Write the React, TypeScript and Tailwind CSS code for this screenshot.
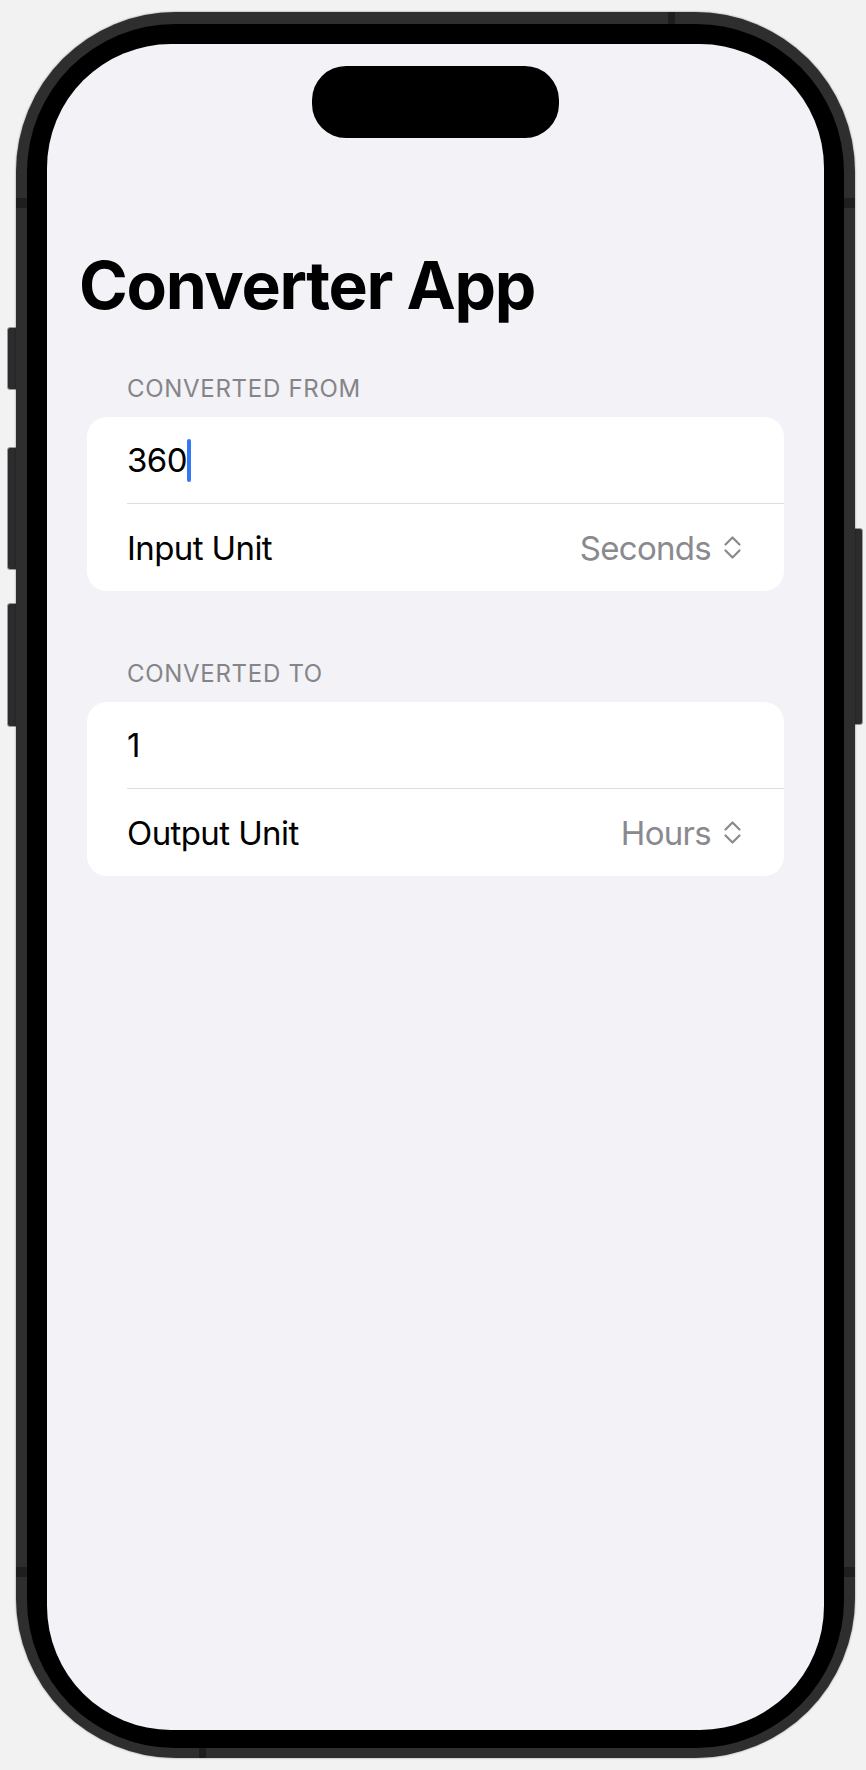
import React from "react";

const font = { fontFamily: "Inter, 'Noto Sans', 'Liberation Sans', sans-serif" };

// up/down chevron shown next to picker values
const UpDown = () => (
  <svg width="19" height="25" viewBox="0 0 19 25" fill="none" stroke="#8a8a8e" strokeWidth="2.2" strokeLinecap="round" strokeLinejoin="round">
    <path d="M2.5 9.5 L9.5 2.5 L16.5 9.5" />
    <path d="M2.5 15.5 L9.5 22.5 L16.5 15.5" />
  </svg>
);

const SectionHeader = ({ text }: { text: string }) => (
  <div className="pl-[80px] text-[24px] leading-[28px] text-[#858589] tracking-[0.7px]">{text}</div>
);

const Card = ({ value, label, unit, cursor }: { value: string; label: string; unit: string; cursor?: boolean }) => (
  <div className="mx-[40px] mt-[14px] bg-white rounded-[20px] overflow-hidden">
    <div className="h-[86px] pl-[40px] flex items-center">
      <span className="text-[33px] leading-[40px] text-black tracking-[-0.6px]">{value}</span>
      {cursor && <span className="w-[4px] h-[43px] rounded-full bg-[#3478f6]" />}
    </div>
    <div className="ml-[40px] h-px bg-[#dedee0]" />
    <div className="h-[87px] pl-[40px] pr-[42px] flex items-center justify-between">
      <span className="text-[33px] leading-[40px] text-black tracking-[-0.6px]">{label}</span>
      <div className="flex items-center gap-[12px]">
        <span className="text-[33px] leading-[40px] text-[#8a8a8e] tracking-[-0.7px]">{unit}</span>
        <UpDown />
      </div>
    </div>
  </div>
);

export default function App() {
  return (
    <div className="relative w-[866px] h-[1770px] bg-[#f2f2f2] overflow-hidden" style={font}>
      {/* hardware buttons */}
      <div className="absolute left-[7px] top-[327px] w-[10px] h-[63px] rounded-l-[3px] bg-[#2c2c2e] border border-[#9a9a9a]" />
      <div className="absolute left-[7px] top-[447px] w-[10px] h-[123px] rounded-l-[3px] bg-[#2c2c2e] border border-[#9a9a9a]" />
      <div className="absolute left-[7px] top-[603px] w-[10px] h-[124px] rounded-l-[3px] bg-[#2c2c2e] border border-[#9a9a9a]" />
      <div className="absolute left-[854px] top-[528px] w-[9px] h-[197px] rounded-r-[3px] bg-[#2c2c2e] border border-[#9a9a9a]" />

      <div className="absolute left-[16px] top-[12px] w-[839px] h-[1746px] pt-[12px] pb-[10px] px-[11px] rounded-[160px] bg-[#2e2e2e] shadow-[0_0_2px_rgba(0,0,0,0.5)]">
        {/* antenna bands */}
        <div className="absolute left-[652px] top-0 w-[7px] h-[12px] bg-[#1e1e1e]" />
        <div className="absolute left-[183px] bottom-0 w-[7px] h-[10px] bg-[#1e1e1e]" />
        <div className="absolute left-0 top-[186px] w-[11px] h-[10px] bg-[#1e1e1e]" />
        <div className="absolute right-0 top-[186px] w-[11px] h-[10px] bg-[#1e1e1e]" />
        <div className="absolute left-0 top-[1555px] w-[11px] h-[10px] bg-[#1e1e1e]" />
        <div className="absolute right-0 top-[1555px] w-[11px] h-[10px] bg-[#1e1e1e]" />

        <div className="relative h-full pt-[20px] pb-[18px] px-[20px] rounded-[148px] bg-black">
          <div className="h-full bg-[#f2f2f7] rounded-[124px] pt-[22px]">
            <div className="mx-auto w-[247px] h-[72px] rounded-[34px] bg-black" />

            <h1 className="mt-[107px] pl-[32px] text-[66px] leading-[80px] font-bold text-black tracking-[-1.3px]">
              Converter App
            </h1>

            <div className="mt-[50px]">
              <SectionHeader text="CONVERTED FROM" />
              <Card value="360" label="Input Unit" unit="Seconds" cursor />
            </div>

            <div className="mt-[69px]">
              <SectionHeader text="CONVERTED TO" />
              <Card value="1" label="Output Unit" unit="Hours" />
            </div>
          </div>
        </div>
      </div>
    </div>
  );
}
